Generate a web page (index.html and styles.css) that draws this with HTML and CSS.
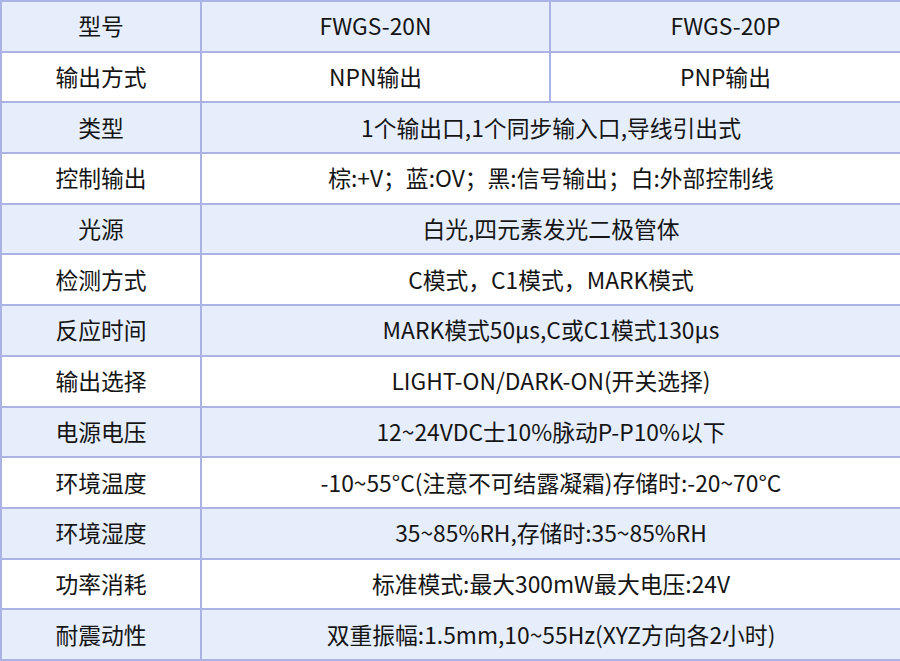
FILE: index.html
```html
<!DOCTYPE html>
<html lang="zh">
<head>
<meta charset="utf-8">
<link rel="stylesheet" href="styles.css">
</head>
<body>
<table class="spec">
<colgroup><col class="c1"><col class="c2"><col class="c3"></colgroup>
<tr class="alt"><td>型号</td><td>FWGS-20N</td><td>FWGS-20P</td></tr>
<tr><td>输出方式</td><td>NPN输出</td><td>PNP输出</td></tr>
<tr class="alt"><td>类型</td><td colspan="2">1个输出口,1个同步输入口,导线引出式</td></tr>
<tr><td>控制输出</td><td colspan="2">棕:+V；蓝:OV；黑:信号输出；白:外部控制线</td></tr>
<tr class="alt"><td>光源</td><td colspan="2">白光,四元素发光二极管体</td></tr>
<tr><td>检测方式</td><td colspan="2">C模式，C1模式，MARK模式</td></tr>
<tr class="alt"><td>反应时间</td><td colspan="2">MARK模式50μs,C或C1模式130μs</td></tr>
<tr><td>输出选择</td><td colspan="2">LIGHT-ON/DARK-ON(开关选择)</td></tr>
<tr class="alt"><td>电源电压</td><td colspan="2">12~24VDC士10%脉动P-P10%以下</td></tr>
<tr><td>环境温度</td><td colspan="2">-10~55°C(注意不可结露凝霜)存储时:-20~70°C</td></tr>
<tr class="alt"><td>环境湿度</td><td colspan="2">35~85%RH,存储时:35~85%RH</td></tr>
<tr><td>功率消耗</td><td colspan="2">标准模式:最大300mW最大电压:24V</td></tr>
<tr class="alt"><td>耐震动性</td><td colspan="2">双重振幅:1.5mm,10~55Hz(XYZ方向各2小时)</td></tr>
</table>
</body>
</html>
```
FILE: styles.css
```css
html, body {
  margin: 0;
  padding: 0;
  background: #ffffff;
}
.spec {
  width: 900px;
  height: 661px;
  border-collapse: collapse;
  table-layout: fixed;
  font-family: "Noto Sans CJK SC", "Noto Sans", sans-serif;
  font-size: 22.8px;
  color: #151515;
}
.c1 { width: 200px; }
.c2 { width: 349px; }
.c3 { width: 351px; }
.spec td {
  border: 2px solid #aab3e3;
  text-align: center;
  vertical-align: middle;
  padding: 0;
  line-height: 26px;
}
.spec tr.alt td {
  background: #e6eefc;
}
```
